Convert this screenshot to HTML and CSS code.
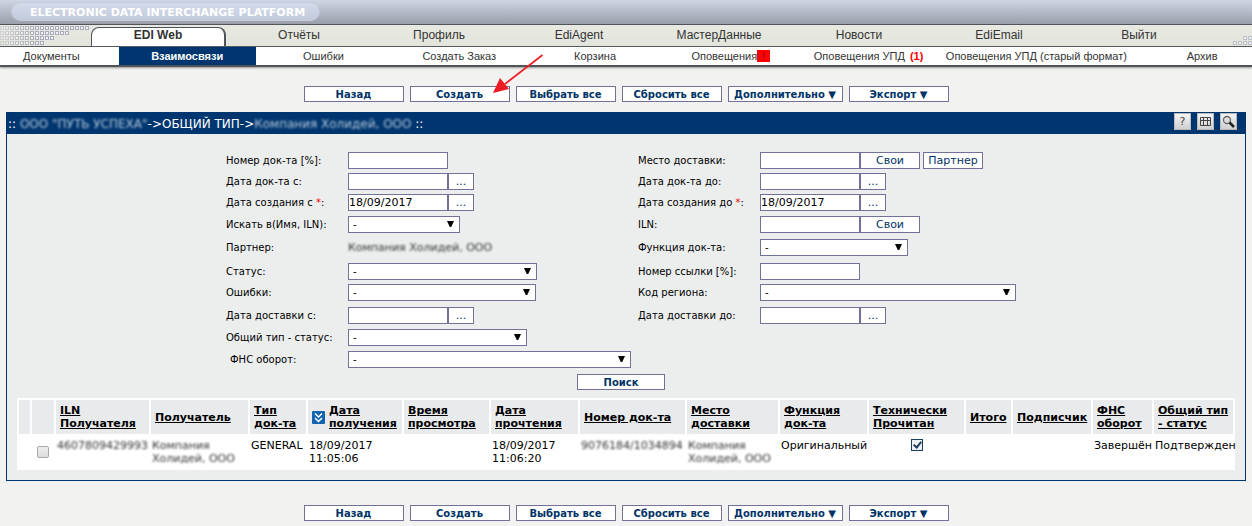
FILE: index.html
```html
<!DOCTYPE html>
<html lang="ru">
<head>
<meta charset="utf-8">
<title>EDI Web – Взаимосвязи</title>
<link rel="stylesheet" href="styles.css">
</head>
<body>
<header class="brandbar"><span class="brand">ELECTRONIC DATA INTERCHANGE PLATFORM</span></header>
<nav class="mainnav">
  <svg class="dots" width="89" height="20" viewBox="0 0 89 20" aria-hidden="true">
    <defs>
      <pattern id="sq" width="5" height="5" patternUnits="userSpaceOnUse"><rect x=".5" y="1.5" width="3" height="3" fill="#f2f2f4" stroke="#a9abba"/></pattern>
      <linearGradient id="fade"><stop offset="0" stop-color="#fff" stop-opacity=".35"/><stop offset=".4" stop-color="#fff"/></linearGradient>
      <mask id="m"><rect width="89" height="20" fill="url(#fade)"/></mask>
    </defs>
    <path mask="url(#m)" fill="url(#sq)" d="M0 0H89V5H69V10H54V15H44V20H0Z"/>
  </svg>
  <a class="tab active" href="#">EDI Web</a>
  <a class="tab" href="#">Отчёты</a>
  <a class="tab" href="#">Профиль</a>
  <a class="tab" href="#">EdiAgent</a>
  <a class="tab" href="#">МастерДанные</a>
  <a class="tab" href="#">Новости</a>
  <a class="tab" href="#">EdiEmail</a>
  <a class="tab" href="#">Выйти</a>
  <svg class="dots" width="43" height="20" viewBox="0 0 43 20" aria-hidden="true">
    <g fill="#f2f2f4" stroke="#b9bbc6"><path d="M34.500 11.500h3v3h-3zM39.500 11.500h3v3h-3zM24.500 16.500h3v3h-3zM29.500 16.500h3v3h-3zM34.500 16.500h3v3h-3zM39.500 16.500h3v3h-3z"/></g>
  </svg>
</nav>
<nav class="subnav">
  <a class="first" href="#">Документы</a>
  <a class="active" href="#">Взаимосвязи</a>
  <a href="#">Ошибки</a>
  <a href="#">Создать Заказ</a>
  <a href="#">Корзина</a>
  <a href="#">Оповещения<span class="alert">!</span></a>
  <a href="#">Оповещения УПД <b class="count">(1)</b></a>
  <a href="#">Оповещения УПД (старый формат)</a>
  <a class="last" href="#">Архив</a>
</nav>

<div class="toolbar">
  <button class="btn">Назад</button>
  <span class="pointed"><button class="btn">Создать</button>
    <svg class="arrow" width="52" height="42" viewBox="0 0 52 42" aria-hidden="true"><path d="M49.500 2 12 31" stroke="#ed1c24" stroke-width="1.700" fill="none"/><path d="M0 40 7 25 16 36Z" fill="#ed1c24"/></svg>
  </span>
  <button class="btn">Выбрать все</button>
  <button class="btn">Сбросить все</button>
  <button class="btn wide">Дополнительно ▼</button>
  <button class="btn">Экспорт ▼</button>
</div>

<main class="panel">
  <div class="panel-head">
    <h1>:: <span class="hidden-name">ООО "ПУТЬ УСПЕХА"</span>-&gt;ОБЩИЙ ТИП-&gt;<span class="hidden-name">Компания Холидей, ООО</span> ::</h1>
    <div class="tools">
      <button class="tool" aria-label="Справка">?</button>
      <button class="tool" aria-label="Столбцы"><svg width="13" height="13" viewBox="0 0 13 13"><path d="M1.500 2.500h10v8h-10zM1 5.500h11M4.500 3v8M8.500 3v8" fill="none" stroke="#444"/></svg></button>
      <button class="tool" aria-label="Поиск"><svg width="13" height="13" viewBox="0 0 13 13"><circle cx="5" cy="5" r="3.500" fill="#ddd" stroke="#666" stroke-width="1.300"/><path d="M7.500 7.500 12 12" stroke="#222" stroke-width="2.500"/></svg></button>
    </div>
  </div>

  <form class="filters">
    <label for="num">Номер док-та [%]:</label><div><input class="field" id="num"></div>
    <label for="place">Место доставки:</label><div><input class="field" id="place"><button type="button" class="pick">Свои</button><button type="button" class="pick spaced">Партнер</button></div>

    <label for="d1">Дата док-та с:</label><div><input class="field" id="d1"><button type="button" class="pick dots3">...</button></div>
    <label for="d2">Дата док-та до:</label><div><input class="field" id="d2"><button type="button" class="pick dots3">...</button></div>

    <label for="c1">Дата создания с <i>*</i>:</label><div><input class="field" id="c1" value="18/09/2017"><button type="button" class="pick dots3">...</button></div>
    <label for="c2">Дата создания до <i>*</i>:</label><div><input class="field" id="c2" value="18/09/2017"><button type="button" class="pick dots3">...</button></div>

    <label for="in">Искать в(Имя, ILN):</label><div><span class="sel w112"><select id="in"><option>-</option></select></span></div>
    <label for="iln">ILN:</label><div><input class="field" id="iln"><button type="button" class="pick">Свои</button></div>

    <span>Партнер:</span><div class="masked partner">Компания Холидей, ООО</div>
    <label for="fn">Функция док-та:</label><div><span class="sel w148"><select id="fn"><option>-</option></select></span></div>

    <label for="st">Статус:</label><div><span class="sel w189"><select id="st"><option>-</option></select></span></div>
    <label for="ref">Номер ссылки [%]:</label><div><input class="field" id="ref"></div>

    <label for="er">Ошибки:</label><div><span class="sel w188"><select id="er"><option>-</option></select></span></div>
    <label for="rg">Код региона:</label><div><span class="sel w256"><select id="rg"><option>-</option></select></span></div>

    <label for="s1">Дата доставки с:</label><div><input class="field" id="s1"><button type="button" class="pick dots3">...</button></div>
    <label for="s2">Дата доставки до:</label><div><input class="field" id="s2"><button type="button" class="pick dots3">...</button></div>

    <label for="gt">Общий тип - статус:</label><div class="rest"><span class="sel w179"><select id="gt"><option>-</option></select></span></div>
    <label class="indent" for="fns">ФНС оборот:</label><div class="rest"><span class="sel w283"><select id="fns"><option>-</option></select></span></div>
    <div class="submit"><button type="button" class="btn search">Поиск</button></div>
  </form>

  <table class="grid">
    <colgroup><col class="c11"><col class="c22"><col class="c93"><col class="c97"><col class="c56"><col class="c94"><col class="c85"><col class="c87"><col class="c105"><col class="c91"><col class="c87"><col class="c95"><col class="c45"><col class="c78"><col class="c59"><col class="c79"></colgroup>
    <thead><tr>
      <th></th><th></th>
      <th><a href="#">ILN<br>Получателя</a></th>
      <th><a href="#">Получатель</a></th>
      <th><a href="#">Тип<br>док-та</a></th>
      <th><div class="sorted"><svg width="13" height="13" viewBox="0 0 13 13" aria-hidden="true"><rect width="13" height="13" rx="1" fill="#1363ae"/><path d="M3 2.500 6.500 6 10 2.500M3 7 6.500 10.500 10 7" fill="none" stroke="#fff" stroke-width="1.500"/></svg><a href="#">Дата<br>получения</a></div></th>
      <th><a href="#">Время<br>просмотра</a></th>
      <th><a href="#">Дата<br>прочтения</a></th>
      <th><a href="#">Номер док-та</a></th>
      <th><a href="#">Место<br>доставки</a></th>
      <th><a href="#">Функция<br>док-та</a></th>
      <th><a href="#">Технически<br>Прочитан</a></th>
      <th><a href="#">Итого</a></th>
      <th><a href="#">Подписчик</a></th>
      <th><a href="#">ФНС<br>оборот</a></th>
      <th><a href="#">Общий тип<br>- статус</a></th>
    </tr></thead>
    <tbody><tr>
      <td></td>
      <td class="mid"><input type="checkbox" class="check" aria-label="Выбрать строку"></td>
      <td><span class="masked">4607809429993</span></td>
      <td><span class="masked">Компания<br>Холидей, ООО</span></td>
      <td>GENERAL</td>
      <td>18/09/2017<br>11:05:06</td>
      <td></td>
      <td>18/09/2017<br>11:06:20</td>
      <td><span class="masked">9076184/1034894</span></td>
      <td><span class="masked">Компания<br>Холидей, ООО</span></td>
      <td>Оригинальный</td>
      <td class="center"><input type="checkbox" class="check read" checked aria-label="Технически прочитан"></td>
      <td></td><td></td>
      <td>Завершён</td>
      <td>Подтвержден</td>
    </tr></tbody>
  </table>
</main>

<div class="toolbar bottom">
  <button class="btn">Назад</button>
  <button class="btn">Создать</button>
  <button class="btn">Выбрать все</button>
  <button class="btn">Сбросить все</button>
  <button class="btn wide">Дополнительно ▼</button>
  <button class="btn">Экспорт ▼</button>
</div>
</body>
</html>
```
FILE: styles.css
```css
* { box-sizing: border-box; }
body { margin: 0; background: #f2f2f0; color: #000; font: 11px/13px Verdana, "DejaVu Sans", sans-serif; }
a { color: inherit; text-decoration: none; }
button, input, select { font: inherit; margin: 0; }

.brandbar { height: 24px; padding: 2px 11px; background: linear-gradient(#ced5e3, #9b9fac); }
.brand { display: inline-block; height: 19px; padding: 1px 14px 0 18px; border: 1px solid #c4cbdc; border-radius: 10px; background: linear-gradient(#d3daea, #c3cadb); color: #fff; font-weight: bold; line-height: 18px; }

.mainnav { display: grid; grid-template-columns: 89px repeat(8, 1fr) 43px; height: 23px; border-top: 1px solid #4e5459; border-bottom: 1px solid #4e5459; background: linear-gradient(#e8e9e2, #e3e4dc); color: #333; font: 12px/21px "Liberation Sans", Arial, sans-serif; text-align: center; }
.mainnav .tab { display: block; }
.mainnav .active { margin: 2px 3px 0 2px; border: 1px solid #4e5459; border-right-width: 2px; border-bottom: 0; border-radius: 8px 8px 0 0; background: #fff; font-weight: bold; line-height: 15px; }
.dots { display: block; }

.subnav { display: grid; grid-template-columns: 119fr 137fr 136fr 136fr 136fr 136fr 140fr 196fr 118fr; height: 20px; border-bottom: 2px solid #4e5459; background: #fff; box-shadow: 0 1px 2px #999; color: #333; font: 11px/18px "Liberation Sans", Arial, sans-serif; text-align: center; white-space: nowrap; }
.subnav .first { padding-right: 16px; }
.subnav .last { padding-left: 18px; }
.subnav .active { background: #003670; color: #fff; font-weight: bold; }
.alert { display: inline-block; width: 13px; background: #f00; color: #8b0000; line-height: 12px; }
.count { margin-left: 2px; color: #f00; }

.toolbar { display: flex; justify-content: center; gap: 6px; margin-top: 19px; }
.pointed { position: relative; display: flex; }
.arrow { position: absolute; left: 83px; top: -33px; pointer-events: none; }
.btn { width: 100px; height: 16px; padding: 1px 0 0; border: 1px solid #73709c; background: #fff; color: #003366; font-size: 10px; font-weight: bold; line-height: 13px; white-space: nowrap; }
.btn.wide { width: 115px; }
.toolbar.bottom { margin: 24px 0 4px; }

.panel { margin: 10px 6px 0; border: 1px solid #003670; background: #eceeee; padding-bottom: 10px; }
.panel-head { display: flex; align-items: center; justify-content: space-between; height: 21px; padding: 0 8px 0 1px; background: #003670; }
.panel-head h1 { margin: 0; color: #fff; font: 12px/20px "DejaVu Sans", sans-serif; white-space: nowrap; }
.hidden-name { color: #b4c6d8; filter: blur(1px); }
.tools { display: flex; gap: 6px; padding-bottom: 4px; }
.tool { display: flex; align-items: center; justify-content: center; width: 17px; height: 17px; padding: 0; border: 1px solid #bbb; background: linear-gradient(#f4f4f4, #cfcfcf); color: #444; }

.filters { display: grid; grid-template-columns: 122px 290px 122px 266px; grid-template-rows: 21px 21px 22px 23px 24px 21px 23px 22px 22px 23px; justify-content: center; padding-top: 18px; font-size: 10px; line-height: 17px; white-space: nowrap; }
.filters > div { display: flex; }
.filters i { color: #f00; font-style: normal; }
.filters .rest { grid-column: 2 / -1; }
.filters .indent { padding-left: 4px; }
.filters .submit { grid-column: 1 / -1; justify-content: center; padding-right: 10px; }
.field { width: 100px; height: 17px; padding: 0; border: 1px solid #73709c; background: #fff; font-size: 11px; }
.pick { width: 60px; height: 17px; padding: 0; border: 1px solid #73709c; background: #fff; color: #003366; font-size: 11px; line-height: 15px; }
.pick.spaced { margin-left: 3px; }
.pick.dots3 { width: 26px; }
.search { width: 88px; }
.sel { position: relative; display: block; height: 17px; }
.sel select { width: 100%; height: 17px; padding: 0 4px; border: 1px solid #73709c; border-radius: 0; background: #fff; appearance: none; color: #000; line-height: 15px; display: block; }
.sel::after { content: ""; position: absolute; right: 6px; top: 5px; width: 7px; height: 6px; background: #000; clip-path: polygon(0 0, 100% 0, 60% 100%, 40% 100%); pointer-events: none; }
.w112 { width: 112px; } .w148 { width: 148px; } .w179 { width: 179px; } .w188 { width: 188px; }
.w189 { width: 189px; } .w256 { width: 256px; } .w283 { width: 283px; }

.masked { color: #333; filter: blur(1px); }
.partner { font-size: 11px; }

.grid { width: calc(100% - 20px); margin: 8px 10px 0; border-spacing: 2px; background: #fff; table-layout: fixed; }
.grid th { height: 34px; padding: 0 4px; background: #e8eaec; text-align: left; vertical-align: middle; white-space: nowrap; }
.grid th a { text-decoration: underline; }
.grid td { height: 32px; padding: 3px 1px 1px; vertical-align: top; white-space: nowrap; }
.grid td.mid { padding: 0; text-align: center; vertical-align: middle; }
.grid td.center { text-align: center; }
.sorted { display: flex; align-items: center; gap: 4px; }
.check { appearance: none; display: block; margin: 0 auto; width: 12px; height: 12px; border: 1px solid #a8a8a8; border-radius: 2px; background: linear-gradient(#eee, #ddd); }
.read { position: relative; border-color: #1c3c5c; border-radius: 0; background: #edf1f5; }
.read::after { content: ""; position: absolute; left: 3px; top: 0; width: 3px; height: 6px; border: solid #1c3c5c; border-width: 0 2px 2px 0; transform: rotate(40deg); }
.c11 { width: 11px; } .c22 { width: 22px; } .c45 { width: 45px; } .c56 { width: 56px; } .c59 { width: 59px; }
.c78 { width: 78px; } .c79 { width: 79px; } .c85 { width: 85px; } .c87 { width: 87px; } .c91 { width: 91px; }
.c93 { width: 93px; } .c94 { width: 94px; } .c95 { width: 95px; } .c97 { width: 97px; } .c105 { width: 105px; }
```
